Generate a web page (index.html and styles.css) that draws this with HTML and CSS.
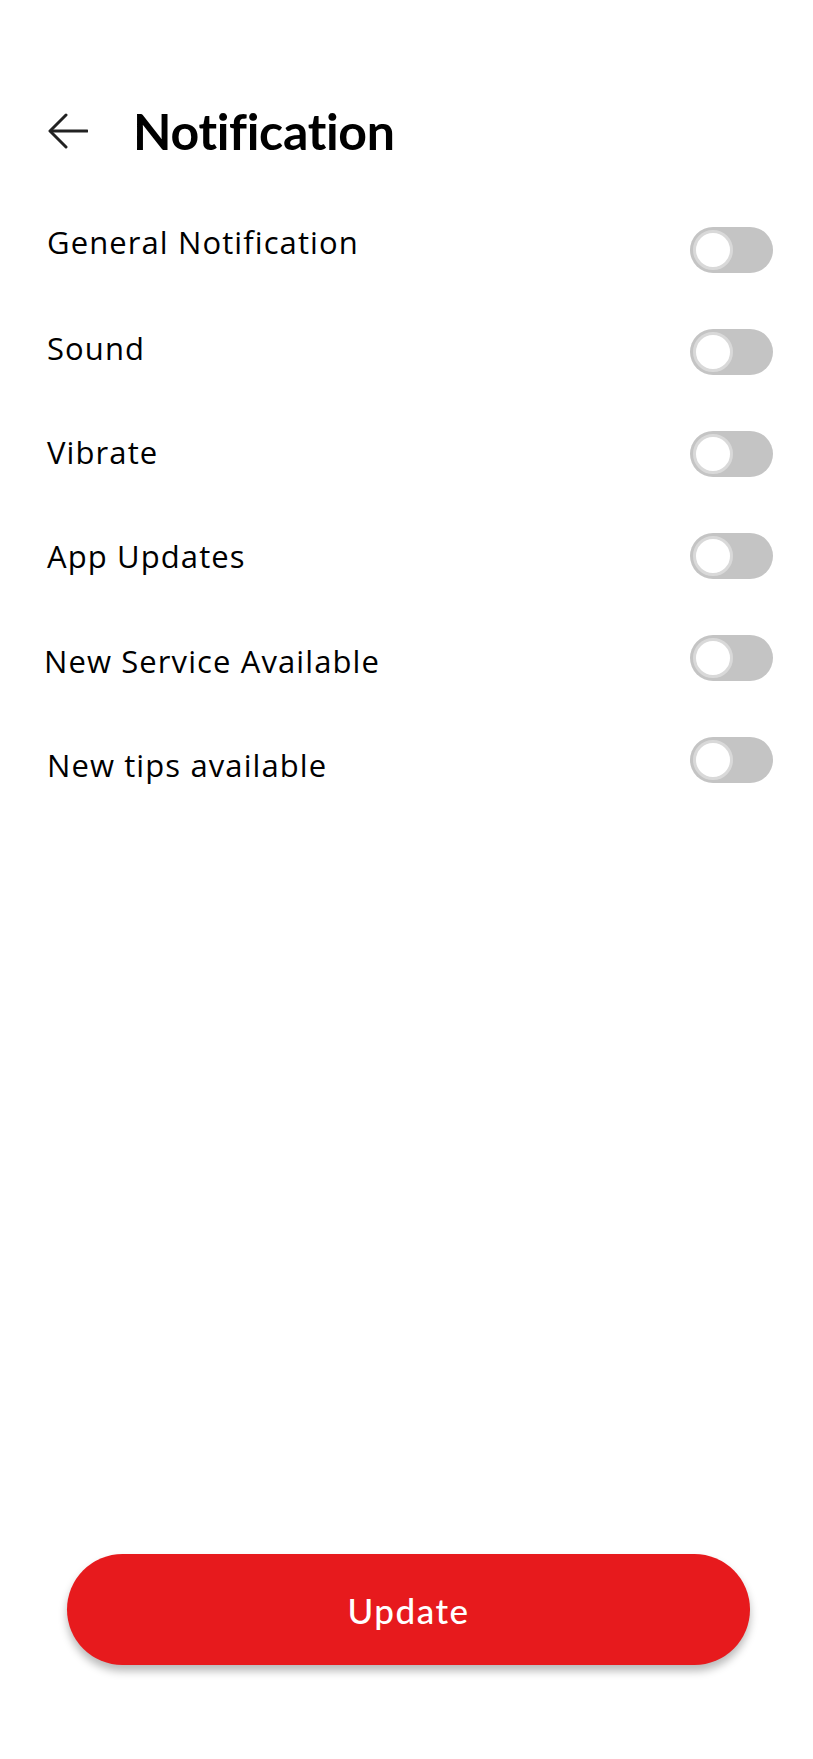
FILE: index.html
```html
<!DOCTYPE html>
<html lang="en">
<head>
<meta charset="utf-8">
<title>Notification</title>
<link rel="stylesheet" href="styles.css">
</head>
<body>
<div class="screen">
  <header class="header">
    <svg class="back" width="40" height="36" viewBox="0 0 40 36" fill="none" stroke="#222" stroke-width="3" stroke-linecap="round" stroke-linejoin="round">
      <path d="M39 18H3"/>
      <path d="M18 2L2 18L18 34"/>
    </svg>
    <h1 class="title">Notification</h1>
  </header>
  <ul class="list">
    <li class="row"><span class="label">General Notification</span><span class="toggle"><span class="knob"></span></span></li>
    <li class="row"><span class="label">Sound</span><span class="toggle"><span class="knob"></span></span></li>
    <li class="row"><span class="label">Vibrate</span><span class="toggle"><span class="knob"></span></span></li>
    <li class="row"><span class="label">App Updates</span><span class="toggle"><span class="knob"></span></span></li>
    <li class="row"><span class="label shift">New Service Available</span><span class="toggle"><span class="knob"></span></span></li>
    <li class="row"><span class="label">New tips available</span><span class="toggle"><span class="knob"></span></span></li>
  </ul>
  <button class="update">Update</button>
</div>
</body>
</html>
```
FILE: styles.css
```css
* { box-sizing: border-box; }
html, body { margin: 0; padding: 0; background: #fff; }
body { font-family: "Lato", "Noto Sans", sans-serif; color: #000; }
.screen {
  width: 813px;
  min-height: 1759px;
  display: flex;
  flex-direction: column;
}
.header {
  display: flex;
  align-items: center;
  padding: 105px 0 0 48px;
  height: 157px;
}
.back { display: block; flex: none; }
.title {
  margin: 0 0 0 45px;
  font-size: 50px;
  font-weight: 700;
  line-height: 52px;
  letter-spacing: -0.3px;
}
.list {
  list-style: none;
  margin: 42px 0 0;
  padding: 0 40px 0 47px;
}
.row {
  height: 102px;
  display: flex;
  align-items: center;
  justify-content: space-between;
}
.label {
  font-family: "Open Sans", "Lato", sans-serif;
  font-size: 31px;
  line-height: 34px;
  letter-spacing: 1.1px;
}
.row:nth-child(1) .label { margin-top: -16px; }
.row:nth-child(2) .label { margin-top: -8px; }
.row:nth-child(3) .label { margin-top: -4px; }
.row:nth-child(4) .label { margin-top: 0; }
.row:nth-child(5) .label { margin-top: 6px; }
.row:nth-child(6) .label { margin-top: 10px; }
.label.shift { margin-left: -3px; }
.toggle {
  width: 83px;
  height: 46px;
  border-radius: 23px;
  background: #c4c4c4;
  display: flex;
  align-items: center;
  padding-left: 3px;
  flex: none;
}
.knob {
  width: 40px;
  height: 40px;
  border-radius: 50%;
  background: #fff;
  border: 3px solid #d9d9d9;
}
.update {
  margin: auto 0 94px 67px;
  width: 683px;
  height: 111px;
  border: none;
  border-radius: 56px;
  background: #e71a1d;
  color: #fff;
  font-family: "Lato", "Noto Sans", sans-serif;
  font-size: 35px;
  font-weight: 500;
  letter-spacing: 1.5px;
  box-shadow: 0 6px 8px rgba(0, 0, 0, 0.28);
}
```
